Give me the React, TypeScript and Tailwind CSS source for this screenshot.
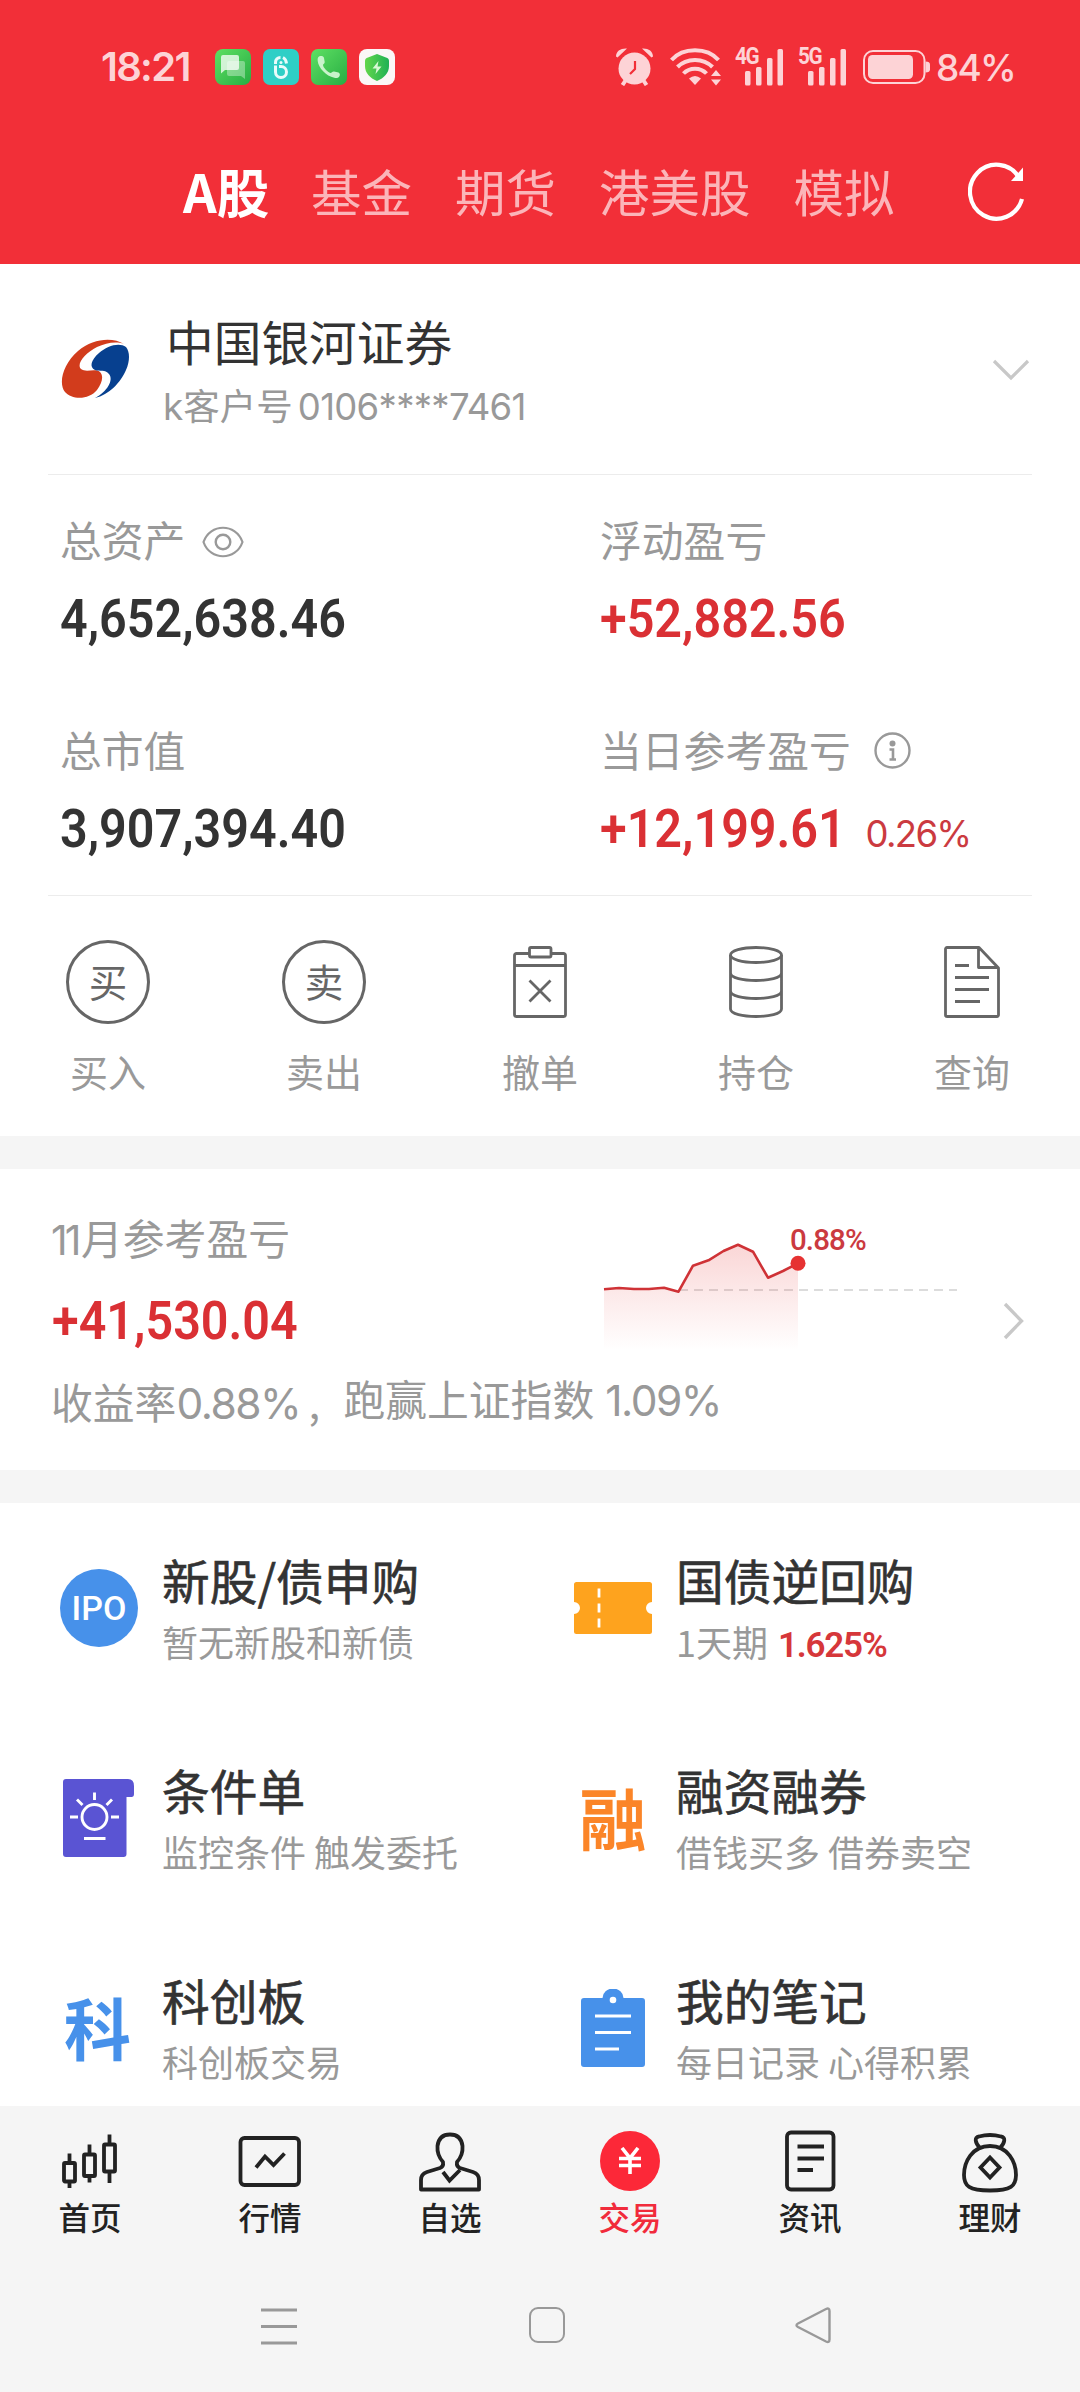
import type { ReactNode } from 'react';

const CJK = "font-['Noto_Sans_CJK_SC',sans-serif]";
const NUM = "font-['Roboto','Noto_Sans_CJK_SC',sans-serif]";
const GEO = "font-['Inter','Noto_Sans_CJK_SC',sans-serif]";

function StatusBar() {
  return (
    <div className="flex h-[134px] items-center pl-[101px] pr-[64px] text-[#fdd3d6]">
      <span className={`${GEO} w-[114px] whitespace-nowrap text-[40px] leading-none font-semibold tracking-[-1.700px]`}>18:21</span>
      <div className="flex gap-3">
        <svg className="size-9" viewBox="0 0 36 36">
          <defs>
            <linearGradient id="green" x1="0" y1="0" x2="1" y2="1">
              <stop offset="0" stopColor="#5fe063" />
              <stop offset="1" stopColor="#27ad43" />
            </linearGradient>
            <linearGradient id="shield" x1="0" y1="0" x2="1" y2="0">
              <stop offset="0" stopColor="#63d64a" />
              <stop offset="1" stopColor="#1fb155" />
            </linearGradient>
          </defs>
          <rect width="36" height="36" rx="8" fill="url(#green)" />
          <path d="M14 12h14a2 2 0 0 1 2 2v16l-4-3H14a2 2 0 0 1-2-2V14a2 2 0 0 1 2-2z" fill="#fff" opacity=".35" />
          <path d="M8 6h14a2 2 0 0 1 2 2v11a2 2 0 0 1-2 2H10l-4 3.500V8a2 2 0 0 1 2-2z" fill="#fff" opacity=".75" />
        </svg>
        <svg className="size-9" viewBox="0 0 36 36">
          <rect width="36" height="36" rx="7" fill="#2fcfc6" />
          <g fill="none" stroke="#e9fbfa" strokeWidth="3">
            <path d="M12.500 15v-1.500c0-3 2-5 5-5M20 8.500c2 1 3.200 3 3.500 6M12.500 16.500v6.500a5.500 5.500 0 1 0 5.500-5.500h-2" />
          </g>
          <circle cx="18" cy="13.500" r="1.500" fill="#e9fbfa" />
        </svg>
        <svg className="size-9" viewBox="0 0 36 36">
          <rect width="36" height="36" rx="7" fill="url(#green)" />
          <path
            d="M8 7.500c2-1 4.500-.5 5 1.500l.7 4c.2 1.500-1.700 2-1.700 3 .5 3 4.500 7 7.500 8 1.200 0 1.800-1.700 3.500-1.500l4.500 1c1.500.5 1.800 2.500.8 4-1 1.500-3 1.700-5 1.300C15 27 7.500 19 6.700 12c-.2-2 0-3.700 1.300-4.500z"
            fill="#c9f3cb"
          />
        </svg>
        <svg className="size-9" viewBox="0 0 36 36">
          <rect width="36" height="36" rx="8" fill="#fbf7f7" />
          <path d="M18 5l9 3.500c2 .7 3 1.500 3 3.500v5c0 7-5 12-12 15C11 29 6 24 6 17v-5c0-2 1-2.800 3-3.500z" fill="url(#shield)" />
          <path d="M19.500 12l-6 7.500h4L16.500 25l6-7.500h-4z" fill="#d9f8d4" />
        </svg>
      </div>
      <div className="ml-auto flex items-center">
        <svg className="mr-[17px] h-[38px] w-[37px]" viewBox="0 0 37 38">
          <g fill="none" stroke="currentColor" strokeWidth="4">
            <path d="M10.500 31l-4 6M26.500 31l4 6" />
          </g>
          <path d="M0 8.500C0 3 5 0 11 .5L1.500 9.500zM37 8.500C37 3 32 0 26 .5l9.500 9z" fill="currentColor" />
          <circle cx="18.500" cy="20.500" r="16" fill="currentColor" />
          <path d="M19 13v8l-5 5" fill="none" stroke="#f22f38" strokeWidth="2.200" />
        </svg>
        <svg className="mr-[14px] h-[38px] w-[51px]" viewBox="0 0 51 38">
          <g fill="none" stroke="currentColor" strokeWidth="4">
            <path d="M1.500 12C13-1 37-1 48.500 12M7.500 19c9-9.500 26-9.500 35 0M13.500 25.500c6-6.500 17-6.500 23 0" />
          </g>
          <path d="M19 30.500q6-5 12 0l-6 6.500z" fill="currentColor" />
          <path d="M41 28l5-6 5 6zM41 31.500h10l-5 6z" fill="currentColor" />
        </svg>
        {['4G', '5G'].map((label) => (
          <span key={label} className="relative mr-[15px] h-[38px] w-[48px]">
            <svg className="size-full" viewBox="0 0 48 38">
              <g fill="currentColor">
                <rect x="10" y="23" width="5.500" height="14.500" rx="1.500" />
                <rect x="21" y="19" width="5.500" height="18.500" rx="1.500" />
                <rect x="32" y="10" width="5.500" height="27.500" rx="1.500" />
                <rect x="42.500" y="1" width="5.500" height="36.500" rx="1.500" />
              </g>
            </svg>
            <span className={`${NUM} absolute left-0 top-[-3px] origin-left scale-x-[.9] text-[23px] leading-none font-bold tracking-[-1.500px]`}>{label}</span>
          </span>
        ))}
        <svg className="mr-[6px] ml-[2px] h-[36px] w-[67px]" viewBox="0 0 67 36">
          <rect x="1" y="2" width="60.500" height="32" rx="9" fill="none" stroke="currentColor" strokeWidth="2" />
          <rect x="5" y="6" width="45" height="24" rx="4.500" fill="currentColor" />
          <path d="M62.500 12.500q4.500 0 4.500 3v5q0 3-4.500 3z" fill="currentColor" />
        </svg>
        <span className={`${GEO} w-[80px] whitespace-nowrap text-[37px] leading-none font-medium tracking-[-1.800px]`}>84%</span>
      </div>
    </div>
  );
}

function MarketTabs() {
  return (
    <div className={`${CJK} flex h-[130px] items-start pt-[29px] pl-[183px] text-[50.500px] leading-[54px]`}>
      <div className="flex w-[785px] gap-[43px] whitespace-nowrap text-[#fbb5b9]">
        <span className="w-[85px] text-[52.500px] font-bold text-white">A股</span>
        <span>基金</span>
        <span>期货</span>
        <span>港美股</span>
        <span>模拟</span>
      </div>
      <svg className="-mt-0.5 h-[60px] w-[58px]" viewBox="0 0 58 60">
        <path d="M51 16.500A26.500 27 0 1 0 54 38" fill="none" stroke="#fff" strokeWidth="4.200" />
        <path d="M55 6.500v13.500H43z" fill="#fff" />
      </svg>
    </div>
  );
}

function AccountRow() {
  return (
    <div className="mx-12 flex h-[211px] border-b border-[#ececec]">
      <svg className="mt-[74px] ml-[13px] h-[61px] w-[69px] shrink-0" viewBox="0 0 69 61">
        <path
          d="M63 6C52-1 32 0 17 13 2 26-3 45 4 54c7 8 24 8 32-2 5-7 7-14 3-18-5-4-14 1-19-3C15 26 24 15 36 9c9-4 19-6 27-3z"
          fill="#d23c1c"
        />
        <path
          d="M65 9C58 4 46 8 38 15c-8 7-10 14-4 17 5 2 10-1 14 4 5 6-2 18-14 24C48 57 60 44 65 32c4-9 4-18 0-23z"
          fill="#07408f"
        />
      </svg>
      <div className="mt-[52px] ml-[36px] grow">
        <div className={`${CJK} text-[47.700px] leading-[50px] text-[#333]`}>中国银河证券</div>
        <div className="mt-[19px] -ml-[3px] flex items-baseline leading-[40px] whitespace-nowrap text-[#999]">
          <span className={`${GEO} text-[37px]`}>k</span>
          <span className={`${CJK} text-[36.500px]`}>客户号</span>
          <span className={`${GEO} ml-[5px] text-[36.500px] tracking-[-.700px]`}>0106****7461</span>
        </div>
      </div>
      <svg className="mt-[95px] mr-[2px] h-[22px] w-[38px]" viewBox="0 0 38 22">
        <path d="M2 2l17 17L36 2" fill="none" stroke="#c8c8c8" strokeWidth="3.200" />
      </svg>
    </div>
  );
}

function Amount({ children, red }: { children: string; red?: boolean }) {
  return (
    <span
      className={`${NUM} inline-block origin-left scale-x-[.915] text-[53px] leading-[54px] font-semibold whitespace-nowrap ${red ? 'text-[#da3034]' : 'text-[#333]'}`}
    >
      {children}
    </span>
  );
}

function Metric({ label, icon, children }: { label: string; icon?: ReactNode; children: ReactNode }) {
  return (
    <div className="h-[210px] pt-[43px]">
      <div className="flex h-[42px] items-center">
        <span className={`${CJK} text-[41.800px] leading-[42px] text-[#999]`}>{label}</span>
        {icon}
      </div>
      <div className="mt-[32px] flex h-[54px] items-baseline">{children}</div>
    </div>
  );
}

function Metrics() {
  return (
    <div className="mx-12 grid h-[421px] grid-cols-[540px_1fr] content-start border-b border-[#ececec] pl-3">
      <Metric
        label="总资产"
        icon={
          <svg className="mt-1.5 ml-[17px] h-[32px] w-[42px]" viewBox="0 0 42 32">
            <path d="M1.500 16C8-3 34-3 40.500 16 34 35 8 35 1.500 16z" fill="none" stroke="#999" strokeWidth="2.200" />
            <circle cx="21" cy="16" r="7.300" fill="none" stroke="#999" strokeWidth="2.400" />
          </svg>
        }
      >
        <Amount>4,652,638.46</Amount>
      </Metric>
      <Metric label="浮动盈亏">
        <Amount red>+52,882.56</Amount>
      </Metric>
      <Metric label="总市值">
        <Amount>3,907,394.40</Amount>
      </Metric>
      <Metric
        label="当日参考盈亏"
        icon={
          <svg className="mt-[3px] ml-[23px] size-[37px]" viewBox="0 0 37 37">
            <circle cx="18.500" cy="18.500" r="17" fill="none" stroke="#999" strokeWidth="2.400" />
            <circle cx="18.500" cy="11.500" r="3" fill="#999" />
            <path d="M15.500 17.500h3.500v9.500M15.500 27.500h6.500" fill="none" stroke="#999" strokeWidth="2.600" />
          </svg>
        }
      >
        <Amount red>+12,199.61</Amount>
        <span className={`${GEO} -ml-[3px] text-[36.500px] leading-none tracking-[-1.700px] text-[#cb3a40]`}>0.26%</span>
      </Metric>
    </div>
  );
}

function RoundGlyph({ children }: { children: string }) {
  return (
    <span className={`${CJK} flex size-[84px] items-center justify-center rounded-full border-3 border-[#666] text-[38.500px] leading-none text-[#666]`}>
      <span className="-mt-1">{children}</span>
    </span>
  );
}

function Actions() {
  const items: { label: string; icon: ReactNode }[] = [
    { label: '买入', icon: <RoundGlyph>买</RoundGlyph> },
    { label: '卖出', icon: <RoundGlyph>卖</RoundGlyph> },
    {
      label: '撤单',
      icon: (
        <svg className="h-[72px] w-[54px]" viewBox="0 0 54 72" fill="none" stroke="#666" strokeWidth="2.800">
          <path d="M16 7.500H3.500a2 2 0 0 0-2 2v59a2 2 0 0 0 2 2h47a2 2 0 0 0 2-2v-59a2 2 0 0 0-2-2H38M1.500 19.500h51" />
          <rect x="16.500" y="1.500" width="21.500" height="9.500" rx="1.500" />
          <path d="M16.500 34.500l21 21M37.500 34.500l-21 21" />
        </svg>
      ),
    },
    {
      label: '持仓',
      icon: (
        <svg className="h-[72px] w-[54px]" viewBox="0 0 54 72" fill="none" stroke="#666" strokeWidth="2.800">
          <ellipse cx="27" cy="9" rx="25.500" ry="7.500" />
          <path d="M1.500 9v54c0 10 51 10 51 0V9M1.500 27c0 10 51 10 51 0M1.500 45c0 10 51 10 51 0" />
        </svg>
      ),
    },
    {
      label: '查询',
      icon: (
        <svg className="h-[72px] w-[56px]" viewBox="0 0 56 72" fill="none" stroke="#666" strokeWidth="2.800">
          <path d="M35 1.500H3a1.500 1.500 0 0 0-1.500 1.500v66A1.500 1.500 0 0 0 3 70.500h50a1.500 1.500 0 0 0 1.500-1.500V22zM34.500 1.500V21.500H54.500" strokeLinejoin="round" />
          <path d="M11 19.500h14M11 31.500h34M11 43.500h34M11 55.500h25" />
        </svg>
      ),
    },
  ];
  return (
    <div className="grid h-[240px] grid-cols-5 pt-[43px]">
      {items.map((item) => (
        <div key={item.label} className="flex flex-col items-center">
          <div className="flex h-[86px] items-center">{item.icon}</div>
          <span className={`${CJK} mt-[26px] text-[38px] leading-[40px] text-[#999]`}>{item.label}</span>
        </div>
      ))}
    </div>
  );
}

function ProfitChart() {
  const line = '1,49.300 16,48 31,49 46,49 61,47.700 75.500,51.700 90,25.700 105.500,20.300 120.500,11 135,4.700 150,11.700 165,37.700 180,31 195,23.300';
  return (
    <div className="relative h-[120px] w-[355px]">
      <svg className="h-[120px] w-[355px]" viewBox="0 0 355 120">
        <defs>
          <linearGradient id="profit" x1="0" y1="0" x2="0" y2="1">
            <stop offset="0" stopColor="#e63232" stopOpacity=".2" />
            <stop offset="1" stopColor="#e63232" stopOpacity="0" />
          </linearGradient>
        </defs>
        <path d="M76 50H354" stroke="#dcdcdc" strokeWidth="2" strokeDasharray="9 6" />
        <polygon points={`1,110 ${line} 195,110`} fill="url(#profit)" />
        <polyline points={line} fill="none" stroke="#cf3236" strokeWidth="2.600" strokeLinejoin="round" />
        <circle cx="195" cy="23.300" r="7.500" fill="#e63232" />
      </svg>
      <span className={`${NUM} absolute left-[187px] top-[-14px] text-[29.500px] leading-none font-medium tracking-[-.900px] text-[#cb3a40]`}>0.88%</span>
    </div>
  );
}

function MonthlyProfit() {
  return (
    <section className="flex h-[301px] bg-white pl-[51px]">
      <div className="w-[552px] pt-[46px] whitespace-nowrap text-[#999]">
        <div className="flex items-baseline leading-[44px]">
          <span className={`${GEO} w-[30px] text-[41px] tracking-[-3px]`}>11</span>
          <span className={`${CJK} text-[41.800px]`}>月参考盈亏</span>
        </div>
        <div className="mt-[32px] h-[54px] pl-px">
          <Amount red>+41,530.04</Amount>
        </div>
        <div className="mt-[27px] flex items-start leading-[46px]">
          <span className="flex items-baseline pt-[3px]">
            <span className={`${CJK} text-[41.800px]`}>收益率</span>
            <span className={`${GEO} w-[132px] text-[42.500px] tracking-[-1.500px]`}>0.88%</span>
            <span className={`${CJK} w-[35px] text-[41.500px]`}>,</span>
          </span>
          <span className="flex items-baseline">
            <span className={`${CJK} text-[41.800px]`}>跑赢上证指数</span>
            <span className={`${GEO} ml-[11px] text-[42.500px] tracking-[-1.500px]`}>1.09%</span>
          </span>
        </div>
      </div>
      <div className="pt-[71px]">
        <ProfitChart />
      </div>
      <svg className="mt-[133px] ml-[45px] h-[38px] w-[22px]" viewBox="0 0 22 38">
        <path d="M2 2l16.500 17L2 36" fill="none" stroke="#c8c8c8" strokeWidth="3.400" />
      </svg>
    </section>
  );
}

function Feature({ icon, title, children }: { icon: ReactNode; title: string; children: ReactNode }) {
  return (
    <div className="flex h-[210px]">
      <div className="mt-[66px] ml-[60px] flex h-[78px] w-[78px] shrink-0 items-center justify-center">{icon}</div>
      <div className={`${CJK} mt-[50px] ml-[24px] whitespace-nowrap`}>
        <div className="text-[47.700px] leading-[54px] text-[#333] [-webkit-text-stroke:.6px_#333]">{title}</div>
        <div className="mt-[12px] flex items-baseline text-[36px] leading-[44px] text-[#999]">{children}</div>
      </div>
    </div>
  );
}

function Features() {
  return (
    <section className="grid h-[603px] grid-cols-[514px_1fr] content-start overflow-hidden bg-white">
      <Feature
        title="新股/债申购"
        icon={
          <span className={`${NUM} flex size-[78px] items-center justify-center rounded-full bg-[#4791ea] text-[34px] leading-none font-medium text-white`}>IPO</span>
        }
      >
        暂无新股和新债
      </Feature>
      <Feature
        title="国债逆回购"
        icon={
          <svg className="h-[52px] w-[78px]" viewBox="0 0 78 52">
            <path d="M2.500 0h73A2.500 2.500 0 0 1 78 2.500v17.500a6 6 0 0 0 0 12v17.500a2.500 2.500 0 0 1-2.500 2.500h-73A2.500 2.500 0 0 1 0 49.500V32a6 6 0 0 0 0-12V2.500A2.500 2.500 0 0 1 2.500 0z" fill="#fea31e" />
            <path d="M25 6.500v9M25 21.500v9M25 36.500v9" stroke="#fff" strokeWidth="2.800" />
          </svg>
        }
      >
        1天期
        <span className={`${NUM} ml-[10px] text-[35px] font-semibold tracking-[-1.200px] text-[#d6373a]`}>1.625%</span>
      </Feature>
      <Feature
        title="条件单"
        icon={
          <svg className="mr-[2px] h-[78px] w-[71px]" viewBox="0 0 71 78">
            <path d="M3 0h62q6 0 6 7v8q0 3-2.500 3H63.500V75q0 3-3 3H3q-3 0-3-3V3q0-3 3-3z" fill="#5a54d3" />
            <g fill="none" stroke="#fff" strokeWidth="2.900">
              <circle cx="31.500" cy="38" r="12.500" />
              <path d="M31.500 13.500v7.500M7 38h8M48 38h8M14 20.500l5.500 5.500M49 20.500L43.500 26M21 59.500h21.500" />
            </g>
          </svg>
        }
      >
        监控条件 触发委托
      </Feature>
      <Feature title="融资融券" icon={<span className={`${CJK} -mt-[5px] text-[67px] leading-[78px] font-bold text-[#fb8528]`}>融</span>}>
        借钱买多 借券卖空
      </Feature>
      <Feature title="科创板" icon={<span className={`${CJK} -mt-[5px] -ml-[3px] text-[67px] leading-[78px] font-bold text-[#4791ea]`}>科</span>}>
        科创板交易
      </Feature>
      <Feature
        title="我的笔记"
        icon={
          <svg className="h-[78px] w-[64px]" viewBox="0 0 64 78">
            <path d="M3 9h18.500a10.500 9.500 0 0 1 21 0H61q3 0 3 3v63q0 3-3 3H3q-3 0-3-3V12q0-3 3-3z" fill="#4791ea" />
            <circle cx="32" cy="11" r="3.300" fill="#fff" />
            <path d="M14 27h36M14 43.500h36M14 60h24" stroke="#fff" strokeWidth="2.900" />
          </svg>
        }
      >
        每日记录 心得积累
      </Feature>
    </section>
  );
}

function TabBar() {
  const s = { fill: 'none', stroke: '#222', strokeWidth: 3.8 };
  const tabs: { label: string; icon: ReactNode; active?: boolean }[] = [
    {
      label: '首页',
      icon: (
        <svg className="size-16" viewBox="0 0 64 64" {...s}>
          <rect x="6" y="34" width="11" height="18.500" rx="1" />
          <rect x="26" y="25.500" width="11" height="21.500" rx="1" />
          <rect x="46" y="15.500" width="11" height="27" rx="1" />
          <path d="M11.500 24.500v9M11.500 53v6M31.500 15.500v9M31.500 47v6.500M51.500 5.500v10M51.500 43v11" />
        </svg>
      ),
    },
    {
      label: '行情',
      icon: (
        <svg className="size-16" viewBox="0 0 64 64" {...s}>
          <rect x="2.500" y="9" width="58.500" height="47" rx="4" />
          <path d="M18 38.500l9-11 8.500 8.500L46.500 24.500" />
        </svg>
      ),
    },
    {
      label: '自选',
      icon: (
        <svg className="size-16" viewBox="0 0 64 64" {...s}>
          <path d="M25 33C20.500 28 19 23.500 19.500 17 20.500 9 25 5.500 32 5.500S43.500 9 44.500 17c.5 6.500-1 11-5.500 16-.5 3 .5 5 3 6l13 4c4.500 1.500 6 4 6 8v9.500H3V51c0-4 1.500-6.500 6-8l13-4c2.500-1 3.500-3 3-6z" strokeLinejoin="round" />
          <path d="M25 43l6.500 8.500L42 41" />
        </svg>
      ),
    },
    {
      label: '交易',
      active: true,
      icon: (
        <span className="flex size-[60px] items-center justify-center rounded-full bg-[#fc2838]">
          <svg className="h-[28px] w-[24px]" viewBox="0 0 24 28" fill="none" stroke="#fff" strokeWidth="3.600">
            <path d="M4 1l8 10 8-10M1 11.500h22M1 18.500h22M12 11v16" />
          </svg>
        </span>
      ),
    },
    {
      label: '资讯',
      icon: (
        <svg className="size-16" viewBox="0 0 64 64" {...s}>
          <rect x="9" y="3.500" width="46.500" height="57" rx="4" />
          <path d="M19.500 17.500H46M19.500 29.500H46M19.500 41h15.500" />
        </svg>
      ),
    },
    {
      label: '理财',
      icon: (
        <svg className="size-16" viewBox="0 0 64 64" {...s}>
          <path d="M22 19C17 14 16 8 21 7.500q11-3 22 0c5 .5 4 6.500-1 11.500" />
          <path d="M32 17C14 17 6 33 6 46c0 11 5 15.500 26 15.500S58 57 58 46C58 33 50 17 32 17z" />
          <path d="M32 28.500L41.500 38.500 32 48.500 22.500 38.500z" />
        </svg>
      ),
    },
  ];
  return (
    <nav className="grid h-[154px] grid-cols-6 pt-[23px]">
      {tabs.map((tab) => (
        <div key={tab.label} className="flex flex-col items-center">
          <div className="flex h-16 items-center">{tab.icon}</div>
          <span className={`${CJK} mt-[5px] text-[31.500px] leading-[36px] font-medium ${tab.active ? 'text-[#f12b3b]' : 'text-[#222]'}`}>{tab.label}</span>
        </div>
      ))}
    </nav>
  );
}

function SystemNav() {
  return (
    <div className="flex pt-[47px] pl-[261px]">
      <svg className="h-[38px] w-[36px]" viewBox="0 0 36 38">
        <path d="M0 3h36M0 19.500h36M0 36h36" stroke="#999" strokeWidth="3" />
      </svg>
      <span className="ml-[232px] h-[36px] w-[36px] rounded-[9px] border-[2.500px] border-[#999]" />
      <svg className="ml-[230px] h-[37px] w-[36px]" viewBox="0 0 36 37">
        <path d="M3 16.500L31 2Q34.500.5 34.500 4V32.500Q34.500 36 31 34.500L3 20Q0 18 3 16.500z" fill="none" stroke="#999" strokeWidth="2.400" />
      </svg>
    </div>
  );
}

export default function App() {
  return (
    <div className="h-[2392px] w-[1080px] overflow-hidden bg-[#f5f5f5]">
      <header className="h-[264px] bg-[#f22f38]">
        <StatusBar />
        <MarketTabs />
      </header>
      <section className="h-[872px] bg-white">
        <AccountRow />
        <Metrics />
        <Actions />
      </section>
      <div className="h-[33px]" />
      <MonthlyProfit />
      <div className="h-[33px]" />
      <Features />
      <TabBar />
      <SystemNav />
    </div>
  );
}
